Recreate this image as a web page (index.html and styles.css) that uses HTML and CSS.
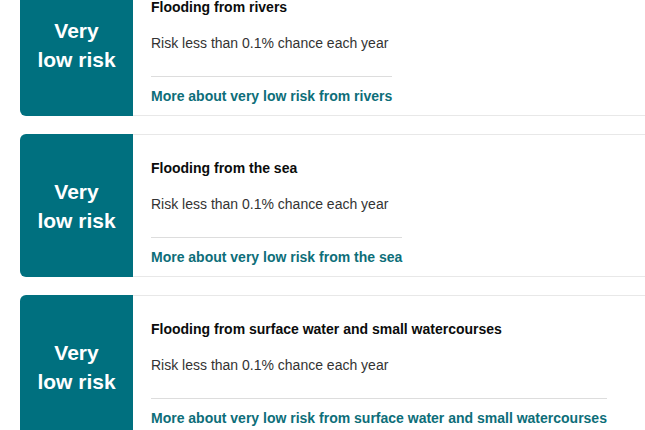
FILE: index.html
```html
<!DOCTYPE html>
<html lang="en">
<head>
<meta charset="utf-8">
<title>Flood risk</title>
<link rel="stylesheet" href="styles.css">
</head>
<body>
<div class="cards">
  <section class="card">
    <div class="badge">Very<br>low risk</div>
    <div class="content">
      <h3 class="title">Flooding from rivers</h3>
      <p class="desc">Risk less than 0.1% chance each year</p>
      <a class="more" href="#">More about very low risk from rivers</a>
    </div>
  </section>
  <section class="card">
    <div class="badge">Very<br>low risk</div>
    <div class="content">
      <h3 class="title">Flooding from the sea</h3>
      <p class="desc">Risk less than 0.1% chance each year</p>
      <a class="more" href="#">More about very low risk from the sea</a>
    </div>
  </section>
  <section class="card">
    <div class="badge">Very<br>low risk</div>
    <div class="content">
      <h3 class="title">Flooding from surface water and small watercourses</h3>
      <p class="desc">Risk less than 0.1% chance each year</p>
      <a class="more" href="#">More about very low risk from surface water and small watercourses</a>
    </div>
  </section>
</div>
</body>
</html>
```
FILE: styles.css
```css
html, body {
  margin: 0;
  padding: 0;
  background: #ffffff;
  overflow: hidden;
}
body {
  font-family: "Liberation Sans", Arial, sans-serif;
  color: #0b0c0c;
}
.cards {
  display: flex;
  flex-direction: column;
  gap: 18px;
  margin-top: -27px;
  padding-left: 20px;
}
.card {
  display: grid;
  grid-template-columns: 113px 1fr;
}
.badge {
  background: #00707f;
  color: #ffffff;
  border-radius: 6px 0 0 6px;
  display: flex;
  align-items: center;
  justify-content: center;
  text-align: center;
  font-weight: bold;
  font-size: 21px;
  line-height: 29px;
}
.content {
  border-top: 1px solid #e8e8e8;
  border-bottom: 1px solid #e8e8e8;
  padding: 23px 18px 9px;
  display: flex;
  flex-direction: column;
  align-items: flex-start;
}
.title {
  margin: 0;
  font-size: 14px;
  line-height: 20px;
  font-weight: bold;
  color: #0b0c0c;
}
.desc {
  margin: 16px 0 23px;
  font-size: 14px;
  line-height: 20px;
  color: #333333;
}
.more {
  display: inline-block;
  border-top: 1px solid #dddddd;
  padding-top: 9px;
  font-size: 14px;
  line-height: 20px;
  font-weight: bold;
  color: #0d6e79;
  text-decoration: none;
}
```
